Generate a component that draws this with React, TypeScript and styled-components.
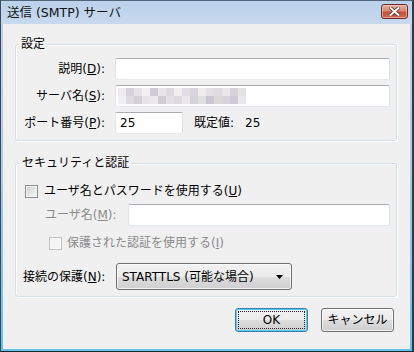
import React from "react";
import styled, { createGlobalStyle } from "styled-components";

const Global = createGlobalStyle`
  html, body { margin: 0; padding: 0; background: #fff; }
  body {
    font-family: "DejaVu Sans", "Noto Sans CJK JP", sans-serif;
    font-size: 12px;
    color: #000;
  }
  #root { width: 414px; height: 352px; }
`;

const Window = styled.div`
  box-sizing: border-box;
  width: 414px;
  height: 352px;
  display: flex;
  flex-direction: column;
  background: linear-gradient(to bottom, #bed3eb 0%, #aecbea 45%, #62c2ea 100%);
  border-left: 1px solid #3a4858;
  border-right: 2px solid #2c3a4a;
  border-bottom: 1px solid #1c2630;
  border-top: 1px solid #52657a;
  padding: 0 2px 2px 2px;
`;

const TitleBar = styled.div`
  height: 23px;
  flex: none;
  display: flex;
  justify-content: space-between;
  align-items: flex-start;
  background: linear-gradient(to bottom, #bcd1ea, #c6d9ee);
  margin: 0 -2px;
  padding: 0 4px 0 6px;
`;

const Title = styled.span`
  line-height: 16px;
  margin-top: 4px;
  font-size: 12.5px;
  color: #111;
  white-space: nowrap;
`;

const CloseButton = styled.div`
  box-sizing: border-box;
  width: 27px;
  height: 15px;
  margin-top: 3px;
  border: 1px solid #6a2c25;
  border-radius: 3px;
  background: linear-gradient(to bottom, #e9ab9b 0%, #d98a76 45%, #c4523a 55%, #cd6a4e 100%);
  box-shadow: inset 0 0 0 1px rgba(255, 220, 210, 0.5);
  display: flex;
  align-items: center;
  justify-content: center;
`;

const Body = styled.div`
  flex: 1;
  display: flex;
  flex-direction: column;
  background: #f0f0f0;
  padding: 12px 13px 0 12px;
`;

const Group = styled.fieldset<{ $pad: string; $top?: number }>`
  margin: ${(p) => p.$top ?? 0}px 0 0 0;
  min-width: 0;
  border: 1px solid #d5dfe5;
  border-radius: 3px;
  box-shadow: inset 1px 1px 0 #fff, 1px 1px 0 #fff;
  padding: ${(p) => p.$pad};
`;

const Legend = styled.legend`
  padding: 0 2px;
  margin-left: -3px;
  line-height: 16px;
  color: #000;
`;

const FormGrid = styled.div`
  display: grid;
  grid-template-columns: 83px 1fr;
  column-gap: 10px;
  row-gap: 5px;
  align-items: center;
`;

const Label = styled.span<{ $disabled?: boolean; $w?: number; $right?: boolean }>`
  line-height: 16px;
  white-space: nowrap;
  color: ${(p) => (p.$disabled ? "#8a8a8a" : "#000")};
  ${(p) => (p.$w ? `width: ${p.$w}px; flex: none;` : "")}
  ${(p) => (p.$right ? "justify-self: end;" : "")}
`;

const Field = styled.div<{ $w?: number }>`
  box-sizing: border-box;
  height: 22px;
  ${(p) => (p.$w ? `width: ${p.$w}px; flex: none;` : "flex: 1; min-width: 0;")}
  background: #fff;
  border: 1px solid;
  border-color: #abadb3 #dbdfe6 #e3e9ef #e2e3ea;
  border-radius: 2px;
  display: flex;
  align-items: center;
  padding: 0 4px;
  line-height: 16px;
`;

const Mosaic = styled.div`
  display: grid;
  grid-template-columns: repeat(16, 8px);
  grid-auto-rows: 8px;
  margin-left: -2px;
`;

const Cell = styled.span<{ $c: string }>`
  background: ${(p) => p.$c};
`;

const Row = styled.div<{ $indent?: number; $top?: number; $gap?: number }>`
  display: flex;
  align-items: center;
  gap: ${(p) => p.$gap ?? 0}px;
  margin-left: ${(p) => p.$indent ?? 0}px;
  margin-top: ${(p) => p.$top ?? 0}px;
`;

const DefaultValue = styled.span`
  display: flex;
  gap: 11px;
  margin-left: 11px;
  line-height: 16px;
`;

const Check = styled.span<{ $disabled?: boolean }>`
  box-sizing: border-box;
  width: 13px;
  height: 13px;
  flex: none;
  border: 1px solid ${(p) => (p.$disabled ? "#c0c0c0" : "#8e8f8f")};
  background: ${(p) =>
    p.$disabled
      ? "#f4f4f4"
      : "linear-gradient(135deg, #cfcfcf 0%, #e6e6e6 55%, #f7f7f7 100%)"};
  box-shadow: inset 0 0 0 1px ${(p) => (p.$disabled ? "#fbfbfb" : "#f4f4f4")};
`;

const Select = styled.div`
  box-sizing: border-box;
  width: 176px;
  height: 27px;
  flex: none;
  border: 1px solid #707070;
  border-radius: 3px;
  background: linear-gradient(to bottom, #f2f2f2 0%, #ebebeb 50%, #dddddd 51%, #cfcfcf 100%);
  box-shadow: inset 0 0 0 1px rgba(255, 255, 255, 0.75);
  display: flex;
  align-items: center;
  justify-content: space-between;
  padding: 0 8px 0 5px;
  line-height: 16px;
  white-space: nowrap;
`;

const Buttons = styled.div`
  display: flex;
  justify-content: flex-end;
  gap: 13px;
  margin-top: 11px;
  padding-right: 3px;
`;

const Button = styled.div<{ $default?: boolean }>`
  box-sizing: border-box;
  width: 73px;
  height: 24px;
  border: 1px solid ${(p) => (p.$default ? "#3c7fb1" : "#707070")};
  border-radius: 3px;
  background: linear-gradient(to bottom, #f2f2f2 0%, #ebebeb 50%, #dddddd 51%, #cfcfcf 100%);
  box-shadow: inset 0 0 0 1px ${(p) => (p.$default ? "#5ccbf2" : "rgba(255,255,255,0.75)")};
  display: flex;
  align-items: center;
  justify-content: center;
  line-height: 16px;
  ${(p) => (p.$default ? "outline: 1px dotted #222; outline-offset: -4px;" : "")}
`;

const row1 = ["#eceaee","#d6d2dc","#e4e2e6","#f2f1f2","#d0ccd6","#e8e6ea","#dcdade","#f0eff0","#e0dde4","#d8d6da","#eeedee","#e2e0e4","#dddbe0","#e8e8e8","#d6d4da","#e4e3e6"];
const row2 = ["#f0eff1","#dedae2","#d2cfd6","#e6e4e8","#ebe9ec","#cfccd4","#e2e0e5","#dcd9df","#e9e8ea","#d4d2d6","#e0dfe1","#c9c7cf","#dad8d6","#d8d4de","#cdcad6","#e9e8ec"];

export default function App() {
  return (
    <>
      <Global />
      <Window>
        <TitleBar>
          <Title>送信 (SMTP) サーバ</Title>
          <CloseButton>
            <svg width="11" height="9" viewBox="0 0 11 9">
              <path d="M1.5 1 L9.5 8 M9.5 1 L1.5 8" stroke="#5a2a24" strokeWidth="3.6" strokeLinecap="square" />
              <path d="M1.5 1 L9.5 8 M9.5 1 L1.5 8" stroke="#fff" strokeWidth="2" strokeLinecap="square" />
            </svg>
          </CloseButton>
        </TitleBar>
        <Body>
          <Group $pad="6px 6px 6px 6px">
            <Legend>設定</Legend>
            <FormGrid>
              <Label $right>説明(<u>D</u>):</Label>
              <Field />
              <Label $right>サーバ名(<u>S</u>):</Label>
              <Field>
                <Mosaic>
                  {[...row1, ...row2].map((c, i) => (
                    <Cell key={i} $c={c} />
                  ))}
                </Mosaic>
              </Field>
              <Label $right>ポート番号(<u>P</u>):</Label>
              <Row>
                <Field $w={68}>25</Field>
                <DefaultValue>
                  <span>既定値:</span>
                  <span>25</span>
                </DefaultValue>
              </Row>
            </FormGrid>
          </Group>

          <Group $pad="12px 6px 6px 7px" $top={14}>
            <Legend>セキュリティと認証</Legend>
            <Row $indent={2} $gap={6}>
              <Check />
              <Label>ユーザ名とパスワードを使用する(<u>U</u>)</Label>
            </Row>
            <Row $indent={22} $top={5}>
              <Label $disabled $w={83}>ユーザ名(<u>M</u>):</Label>
              <Field />
            </Row>
            <Row $indent={26} $top={9} $gap={5}>
              <Check $disabled />
              <Label $disabled>保護された認証を使用する(<u>I</u>)</Label>
            </Row>
            <Row $top={12}>
              <Label $w={93}>接続の保護(<u>N</u>):</Label>
              <Select>
                <span>STARTTLS (可能な場合)</span>
                <svg width="7" height="4" viewBox="0 0 7 4">
                  <path d="M0 0 H7 L3.5 4 Z" fill="#000" />
                </svg>
              </Select>
            </Row>
          </Group>

          <Buttons>
            <Button $default>OK</Button>
            <Button>キャンセル</Button>
          </Buttons>
        </Body>
      </Window>
    </>
  );
}
